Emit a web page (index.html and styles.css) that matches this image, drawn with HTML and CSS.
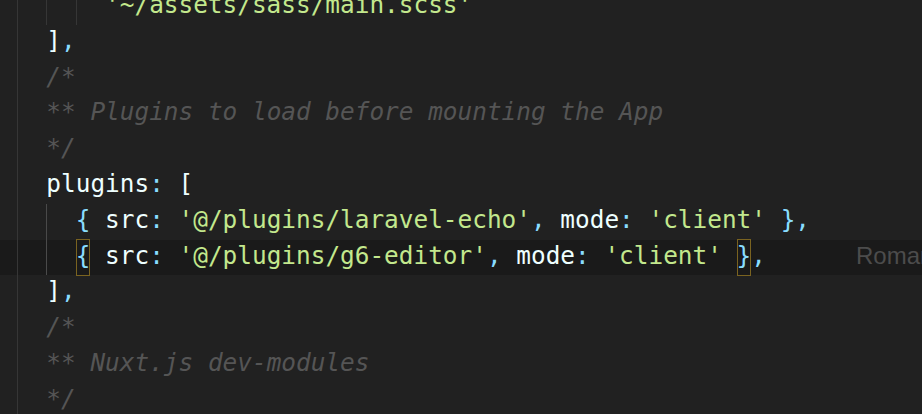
FILE: index.html
```html
<!DOCTYPE html>
<html lang="en">
<head>
    <meta charset="UTF-8">
    <meta name="viewport" content="width=device-width, initial-scale=1.0">
    <title>nuxt.config.js</title>
    <link rel="stylesheet" href="styles.css">
</head>
<body>
    <div class="editor">
        <div class="line"><span class="guide"></span><span class="guide"></span><span class="guide"></span><span class="str">'~/assets/sass/main.scss'</span></div>
        <div class="line"><span class="guide"></span><span class="txt">]</span><span class="pun">,</span></div>
        <div class="line"><span class="guide"></span><span class="com">/*</span></div>
        <div class="line"><span class="guide"></span><span class="com">** Plugins to load before mounting the App</span></div>
        <div class="line"><span class="guide"></span><span class="com">*/</span></div>
        <div class="line"><span class="guide"></span><span class="txt">plugins</span><span class="pun">:</span> <span class="txt">[</span></div>
        <div class="line"><span class="guide"></span><span class="guide active"></span><span class="pun">{</span> <span class="txt">src</span><span class="pun">:</span> <span class="str">'@/plugins/laravel-echo'</span><span class="pun">,</span> <span class="txt">mode</span><span class="pun">:</span> <span class="str">'client'</span> <span class="pun">},</span></div>
        <div class="line current"><span class="guide"></span><span class="guide active"></span><span class="pun match">{</span> <span class="txt">src</span><span class="pun">:</span> <span class="str">'@/plugins/g6-editor'</span><span class="pun">,</span> <span class="txt">mode</span><span class="pun">:</span> <span class="str">'client'</span> <span class="pun match">}</span><span class="pun">,</span><span class="blame">Roman</span></div>
        <div class="line"><span class="guide"></span><span class="txt">]</span><span class="pun">,</span></div>
        <div class="line"><span class="guide"></span><span class="com">/*</span></div>
        <div class="line"><span class="guide"></span><span class="com">** Nuxt.js dev-modules</span></div>
        <div class="line"><span class="guide"></span><span class="com">*/</span></div>
    </div>
</body>
</html>
```
FILE: styles.css
```css
html, body {
    margin: 0;
    height: 100%;
    overflow: hidden;
    background-color: #212121;
}

.editor {
    margin-top: -11px;
    font-family: "DejaVu Sans Mono", "Liberation Mono", monospace;
    font-size: 24.4px;
    color: #eeffff;
}

.line {
    line-height: 31.8px;
    padding-bottom: 4px;
    padding-left: 17px;
    white-space: pre;
}

.line.current {
    background-color: #1a1a1a;
}

.guide {
    display: inline-block;
    box-sizing: border-box;
    width: 2ch;
    height: 35.8px;
    margin-bottom: -4px;
    vertical-align: top;
    border-left: 1px solid #363636;
}

.guide.active {
    border-left-color: #4a4a4a;
}

.txt {
    color: #eeffff;
}

.pun {
    color: #89ddff;
}

.str {
    color: #c3e88d;
}

.com {
    color: #555555;
    font-style: italic;
}

.match {
    padding: 2px 0 6px;
    box-shadow: inset 0 0 0 1px #7a6320;
}

.blame {
    margin-left: 90px;
    font-family: "Liberation Sans", Arial, sans-serif;
    font-size: 24px;
    color: #4c4c4c;
}
```
